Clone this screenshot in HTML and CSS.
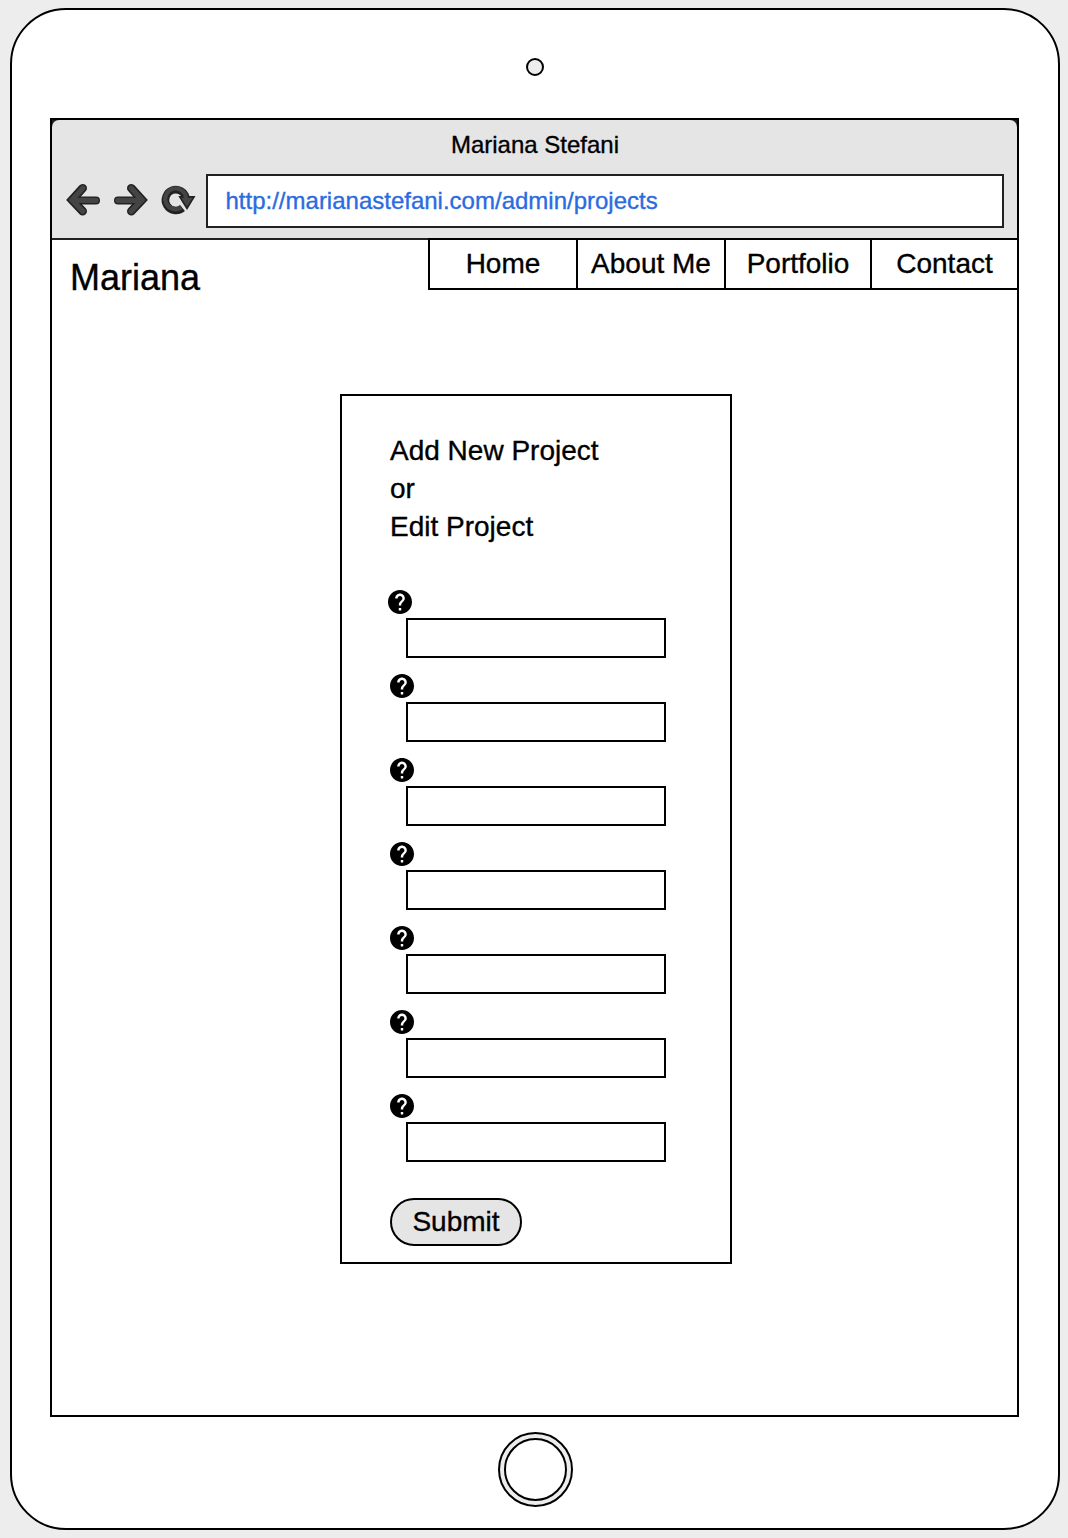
FILE: index.html
```html
<!DOCTYPE html>
<html lang="en">
<head>
<meta charset="utf-8">
<title>Mariana Stefani</title>
<link rel="stylesheet" href="styles.css">
</head>
<body>
<svg class="defs" aria-hidden="true">
  <symbol id="help" viewBox="2 2 20 20">
    <circle cx="12" cy="12" r="9.5" fill="#fff"/>
    <path d="M12 2C6.48 2 2 6.48 2 12s4.48 10 10 10 10-4.48 10-10S17.52 2 12 2zm1 17h-2v-2h2v2zm2.07-7.75l-.9.92C13.45 12.9 13 13.5 13 15h-2v-.5c0-1.1.45-2.1 1.17-2.83l1.24-1.26c.37-.36.59-.86.59-1.41 0-1.1-.9-2-2-2s-2 .9-2 2H8c0-2.21 1.79-4 4-4s4 1.79 4 4c0 .88-.36 1.68-.93 2.25z" fill="#000"/>
  </symbol>
</svg>
<div class="device">
  <div class="camera"></div>
  <div class="screen">
    <header class="chrome">
      <div class="title">Mariana Stefani</div>
      <div class="toolbar">
        <svg class="controls" viewBox="64 180 134 40" width="134" height="40">
          <g fill="none" stroke-linecap="round" stroke-miterlimit="6">
            <g stroke="#222021" stroke-width="8">
              <path d="M73 200.4H96"/><path stroke-width="8.6" d="M82.7 188.2L72 200L82.7 211.2"/>
              <path d="M141 200.4H118"/><path stroke-width="8.6" d="M131.3 188.2L142 200L131.3 211.2"/>
            </g>
            <g stroke="#444" stroke-width="5.4">
              <path d="M73 200.4H96M82.7 188.2L72 200L82.7 211.2"/>
              <path d="M141 200.4H118M131.3 188.2L142 200L131.3 211.2"/>
            </g>
          </g>
          <g fill="none">
            <path d="M186 197.8A10.4 10.4 0 1 0 182.5 208" stroke="#222021" stroke-width="7.6"/>
            <path d="M178.3 196.1H195.5L187 209.9Z" fill="#222021"/>
            <path d="M186 198A10.4 10.4 0 1 0 181.4 207.5" stroke="#444" stroke-width="4.2"/>
            <path d="M181.2 197.7H192.7L187 206.8Z" fill="#444"/>
          </g>
        </svg>
        <div class="address">http://marianastefani.com/admin/projects</div>
      </div>
    </header>
    <div class="site-head">
      <div class="brand">Mariana</div>
      <nav class="nav">
        <a>Home</a><a>About Me</a><a>Portfolio</a><a>Contact</a>
      </nav>
    </div>
    <form class="card">
      <div class="heading">Add New Project<br>or<br>Edit Project</div>
      <div class="field first"><svg class="help"><use href="#help"/></svg><input class="input" type="text"></div>
      <div class="field"><svg class="help"><use href="#help"/></svg><input class="input" type="text"></div>
      <div class="field"><svg class="help"><use href="#help"/></svg><input class="input" type="text"></div>
      <div class="field"><svg class="help"><use href="#help"/></svg><input class="input" type="text"></div>
      <div class="field"><svg class="help"><use href="#help"/></svg><input class="input" type="text"></div>
      <div class="field"><svg class="help"><use href="#help"/></svg><input class="input" type="text"></div>
      <div class="field"><svg class="help"><use href="#help"/></svg><input class="input" type="text"></div>
      <button class="submit" type="button">Submit</button>
    </form>
  </div>
  <div class="home"><div class="home-inner"></div></div>
</div>
</body>
</html>
```
FILE: styles.css
```css
* { box-sizing: border-box; }
body {
  margin: 0;
  height: 1538px;
  padding: 8px 0 0 10px;
  overflow: hidden;
  background: #ededed;
  color: #000;
  font-family: "Liberation Sans", Arial, sans-serif;
  font-size: 28px;
  -webkit-text-stroke: 0.35px currentColor;
}
.defs { display: none; }
.device {
  display: flex;
  flex-direction: column;
  width: 1050px;
  height: 1522px;
  padding-top: 48px;
  border: 2px solid #000;
  border-radius: 56px;
  background: #fff;
}
.camera {
  align-self: center;
  width: 18px;
  height: 18px;
  border: 2px solid #000;
  border-radius: 50%;
  background: #ededed;
}
.screen {
  width: 969px;
  height: 1299px;
  margin: 42px 0 0 38px;
  border: 2px solid #000;
  background: linear-gradient(#222 12px, #fff 12px);
}
.chrome {
  height: 120px;
  border-bottom: 2px solid #222021;
  border-radius: 7px 7px 0 0;
  background: #e5e5e5;
}
.title {
  height: 54px;
  padding-left: 1px;
  font-size: 24px;
  line-height: 50px;
  text-align: center;
}
.toolbar {
  display: flex;
  gap: 8px;
  padding: 0 13px 0 12px;
}
.controls { margin-top: 6px; }
.address {
  flex: 1;
  height: 54px;
  padding-left: 17.5px;
  border: 2px solid #222021;
  background: #fff;
  color: #2a6cdf;
  font-size: 24px;
  line-height: 49px;
}
.site-head {
  display: flex;
  justify-content: space-between;
  padding-left: 18px;
}
.brand {
  padding-top: 17px;
  font-size: 36px;
  line-height: 41px;
}
.nav {
  display: grid;
  grid-template-columns: 148px 148px 146px 147px;
  height: 52px;
  margin-top: -2px;
  border-top: 2px solid #000;
  border-bottom: 2px solid #000;
}
.nav a {
  border-left: 2px solid #000;
  line-height: 47px;
  text-align: center;
}
.card {
  display: flex;
  flex-direction: column;
  align-items: flex-start;
  width: 392px;
  height: 870px;
  margin: 96px 0 0 288px;
  padding: 36px 0 0 48px;
  border: 2px solid #000;
}
.heading {
  height: 158px;
  line-height: 38px;
}
.field {
  display: flex;
  flex-direction: column;
  height: 84px;
}
.help {
  width: 24px;
  height: 24px;
  margin-bottom: 4px;
}
.first .help { margin-left: -2px; }
.input {
  width: 260px;
  height: 40px;
  margin: 0 0 0 16px;
  border: 2px solid #000;
  background: #fff;
}
.submit {
  width: 132px;
  height: 48px;
  margin-top: 20px;
  padding: 0;
  border: 2px solid #000;
  border-radius: 24px;
  background: #e5e5e5;
  color: #000;
  font: inherit;
}
.home {
  display: flex;
  align-items: center;
  justify-content: center;
  width: 75px;
  height: 75px;
  margin: 15px 0 0 486px;
  border: 2px solid #000;
  border-radius: 50%;
  background: #ededed;
}
.home-inner {
  width: 63px;
  height: 63px;
  border: 2px solid #000;
  border-radius: 50%;
  background: #fff;
}
```
